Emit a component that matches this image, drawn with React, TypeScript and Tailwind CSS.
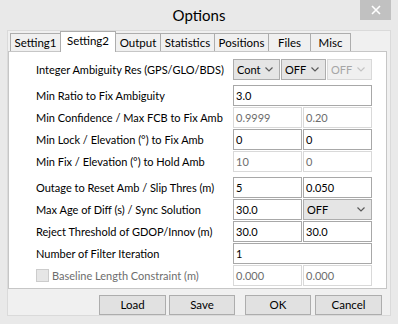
import React from 'react';

const tabs = [
  { label: 'Setting1', w: 'w-[50px]', first: true },
  { label: 'Setting2', w: 'w-[56px]', active: true },
  { label: 'Output', w: 'w-[45px]' },
  { label: 'Statistics', w: 'w-[54px]' },
  { label: 'Positions', w: 'w-[54px]' },
  { label: 'Files', w: 'w-[42px]' },
  { label: 'Misc', w: 'w-[40px]' },
];

function Chevron({ disabled }: { disabled?: boolean }) {
  return (
    <svg width="8" height="5" viewBox="0 0 8 5" fill="none">
      <path
        d="M0.5 0.5L4 4L7.5 0.5"
        stroke={disabled ? '#c4c4c4' : '#5a5a5a'}
        strokeWidth="1.2"
      />
    </svg>
  );
}

function Combo({ value, w, disabled }: { value: string; w: string; disabled?: boolean }) {
  return (
    <div
      className={`${w} h-[21px] border flex items-center justify-between pl-[3px] pr-[6px] ${
        disabled
          ? 'border-[#d9d9d9] bg-[#f0f0f0] text-[#a6a6a6]'
          : 'border-[#adadad] bg-[#e5e5e5] text-black'
      }`}
    >
      <span>{value}</span>
      <Chevron disabled={disabled} />
    </div>
  );
}

function Field({ value, w, disabled }: { value: string; w: string; disabled?: boolean }) {
  return (
    <div
      className={`${w} h-[21px] border flex items-center px-[2px] bg-white ${
        disabled ? 'border-[#d9d9d9] text-[#6d6d6d]' : 'border-[#a8a8a8] text-black'
      }`}
    >
      {value}
    </div>
  );
}

function Row({ label, children }: { label: string; children: React.ReactNode }) {
  return (
    <div className="flex h-[21px] items-center">
      <div className="w-[197px] whitespace-nowrap">{label}</div>
      <div className="flex w-[139px] gap-px">{children}</div>
    </div>
  );
}

export default function App() {
  return (
    <div className="w-[398px] h-[324px] bg-[#e9e9e9] flex flex-col font-['Lato',sans-serif] text-[11px] text-black leading-none">
      {/* Title bar */}
      <div className="relative h-[30px] flex items-center justify-center">
        <span className="text-[15px] text-black">Options</span>
        <div className="absolute right-[7px] top-0 w-[31px] h-[20px] bg-[#c1c1c1] flex items-center justify-center">
          <svg width="10" height="10" viewBox="0 0 10 10">
            <path d="M1 1L9 9M9 1L1 9" stroke="white" strokeWidth="1.6" />
          </svg>
        </div>
      </div>

      {/* Client area */}
      <div className="ml-[7px] w-[384px] h-[286px] border border-[#dadada] bg-[#f0f0f0] flex flex-col">
        {/* Tabs */}
        <div className="h-[20px] flex items-end pl-[2px] text-[11.5px]">
          {tabs.map((t) =>
            t.active ? (
              <div
                key={t.label}
                className={`${t.w} h-[21px] -mb-px relative z-10 bg-white border-x border-t border-[#adadad] flex items-center justify-center pb-[2px]`}
              >
                {t.label}
              </div>
            ) : (
              <div
                key={t.label}
                className={`${t.w} h-[18px] bg-[#f0f0f0] border-t border-r border-[#adadad] ${
                  t.first ? 'border-l border-r-0' : ''
                } flex items-center justify-center`}
              >
                {t.label}
              </div>
            )
          )}
        </div>

        {/* Panel */}
        <div className="w-[379px] h-[238px] border border-[#c6c6c6] bg-white pt-[7px] pl-[27px] flex flex-col">
          <Row label="Integer Ambiguity Res (GPS/GLO/BDS)">
            <Combo value="Cont" w="w-[47px]" />
            <Combo value="OFF" w="w-[45px]" />
            <Combo value="OFF" w="w-[45px]" disabled />
          </Row>
          <div className="mt-[5px] flex flex-col gap-px">
            <Row label="Min Ratio to Fix Ambiguity">
              <Field value="3.0" w="w-[139px]" />
            </Row>
            <Row label="Min Confidence / Max FCB to Fix Amb">
              <Field value="0.9999" w="w-[69px]" disabled />
              <Field value="0.20" w="w-[69px]" disabled />
            </Row>
            <Row label="Min Lock / Elevation (°) to Fix Amb">
              <Field value="0" w="w-[69px]" />
              <Field value="0" w="w-[69px]" />
            </Row>
            <Row label="Min Fix / Elevation (°) to Hold Amb">
              <Field value="10" w="w-[69px]" disabled />
              <Field value="0" w="w-[69px]" disabled />
            </Row>
          </div>
          <div className="mt-[5px] flex flex-col gap-px">
            <Row label="Outage to Reset Amb / Slip Thres (m)">
              <Field value="5" w="w-[69px]" />
              <Field value="0.050" w="w-[69px]" />
            </Row>
            <Row label="Max Age of Diff (s) / Sync Solution">
              <Field value="30.0" w="w-[69px]" />
              <Combo value="OFF" w="w-[69px]" />
            </Row>
            <Row label="Reject Threshold of GDOP/Innov (m)">
              <Field value="30.0" w="w-[69px]" />
              <Field value="30.0" w="w-[69px]" />
            </Row>
            <Row label="Number of Filter Iteration">
              <Field value="1" w="w-[139px]" />
            </Row>
            <div className="flex h-[21px] items-center">
              <div className="w-[197px] flex items-center gap-[3px] whitespace-nowrap text-[#6d6d6d]">
                <div className="w-[13px] h-[13px] border border-[#cccccc] bg-[#e6e6e6]" />
                <span>Baseline Length Constraint (m)</span>
              </div>
              <div className="flex w-[139px] gap-px">
                <Field value="0.000" w="w-[69px]" disabled />
                <Field value="0.000" w="w-[69px]" disabled />
              </div>
            </div>
          </div>
        </div>

        {/* Buttons */}
        <div className="mt-[6px] flex pl-[91px] text-[11.5px]">
          <button className="w-[67px] h-[20px] bg-[#e1e1e1] border border-[#adadad]">Load</button>
          <button className="ml-[3px] w-[66px] h-[20px] bg-[#e1e1e1] border border-[#adadad]">Save</button>
          <button className="ml-[10px] w-[66px] h-[20px] bg-[#e1e1e1] border border-[#adadad]">OK</button>
          <button className="ml-[4px] w-[67px] h-[20px] bg-[#e1e1e1] border border-[#adadad]">Cancel</button>
        </div>
      </div>
    </div>
  );
}
